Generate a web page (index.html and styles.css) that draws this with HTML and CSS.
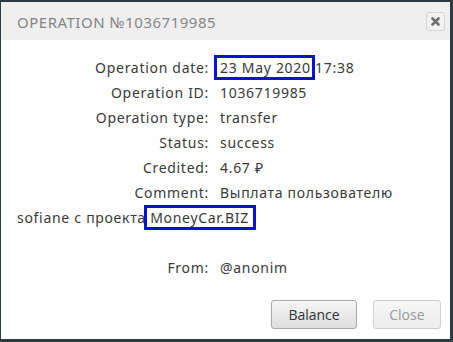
FILE: index.html
```html
<!DOCTYPE html>
<html lang="en">
<head>
    <meta charset="UTF-8">
    <title>Operation</title>
    <link rel="stylesheet" href="styles.css">
</head>
<body>
    <div class="dialog">
        <div class="dialog-header">
            <span class="dialog-title">Operation №1036719985</span>
            <button class="dialog-x">
                <svg width="9" height="9" viewBox="0 0 9 9"><path d="M1.5 1.5 L7.5 7.5 M7.5 1.5 L1.5 7.5" stroke="#6e6e6e" stroke-width="2.6" stroke-linecap="round"/></svg>
            </button>
        </div>
        <div class="dialog-body">
            <div class="row"><span class="label">Operation date:</span><span class="mark">23 May 2020</span> 17:38</div>
            <div class="row"><span class="label">Operation ID:</span>1036719985</div>
            <div class="row"><span class="label">Operation type:</span>transfer</div>
            <div class="row"><span class="label">Status:</span>success</div>
            <div class="row"><span class="label">Credited:</span>4.67 ₽</div>
            <div class="row"><span class="label">Comment:</span>Выплата пользователю sofiane с проекта <span class="mark mark-wide">MoneyCar.BIZ</span></div>
            <div class="row"><br></div>
            <div class="row"><span class="label">From:</span>@anonim</div>
        </div>
        <div class="dialog-footer">
            <button class="btn">Balance</button>
            <button class="btn btn-disabled">Close</button>
        </div>
    </div>
</body>
</html>
```
FILE: styles.css
```css
body {
    margin: 0;
    background-color: #2d3b42;
    height: 342px;
    overflow: hidden;
}
.dialog {
    margin: 2px 3px 0 1px;
    height: 337px;
    background-color: #fff;
    display: flex;
    flex-direction: column;
    font-family: "Noto Sans", sans-serif;
}
.dialog-header {
    height: 38px;
    background-color: #efefef;
    display: flex;
    align-items: center;
    justify-content: space-between;
    padding: 0 5px 0 16px;
}
.dialog-title {
    font-family: "Noto Sans", sans-serif;
    text-transform: uppercase;
    color: #858585;
    font-size: 15px;
    letter-spacing: 0.5px;
    padding-top: 1px;
}
.dialog-x {
    width: 19px;
    height: 19px;
    padding: 0;
    border: 1px solid #d6d6d6;
    border-radius: 3px;
    background-color: #f2f2f2;
    display: flex;
    align-items: center;
    justify-content: center;
    margin-top: 1px;
}
.dialog-body {
    padding: 15px 16px 0 16px;
    color: #3a3a3a;
    font-size: 14px;
    letter-spacing: 0.7px;
    line-height: 25px;
    flex: 1;
}
.label {
    display: inline-block;
    width: 192px;
    text-align: right;
    margin-right: 11px;
}
.mark {
    outline: 3px solid #0a10e0;
    outline-offset: 0;
    padding: 0 1px 0 3px;
    margin: 0 -1px 0 -3px;
}
.mark-wide {
    padding-right: 4px;
    margin-right: -4px;
}
.dialog-footer {
    display: flex;
    justify-content: flex-end;
    gap: 16px;
    padding: 0 9px 10px 0;
}
.btn {
    height: 29px;
    padding: 0 16px;
    font-family: "Open Sans", sans-serif;
    font-size: 14px;
    color: #333;
    border: 1px solid #a9a9a9;
    border-radius: 3px;
    background: linear-gradient(#f6f6f6, #dedede);
}
.btn-disabled {
    padding: 0 15.5px;
    color: #9a9a9a;
    border-color: #d0d0d0;
    background: linear-gradient(#f7f7f7, #ececec);
}
```
